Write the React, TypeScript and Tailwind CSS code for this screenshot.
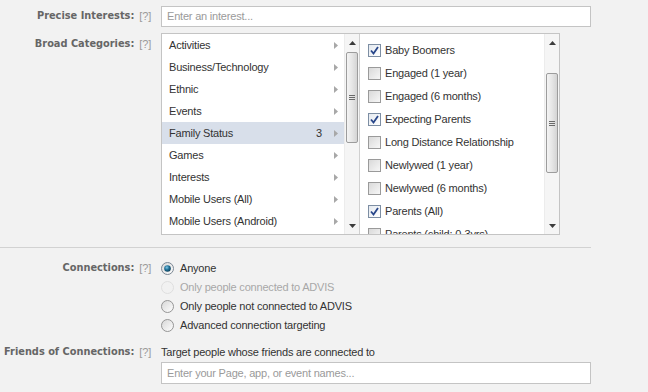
import React from "react";

const FONT = "font-['Liberation_Sans',Arial,sans-serif]";

function Help() {
  return <span className="ml-[5px] text-[11px] font-normal text-[#9a9a9a] font-['Liberation_Sans',Arial,sans-serif]">[?]</span>;
}

function Label({ children, className = "" }: { children: React.ReactNode; className?: string }) {
  return (
    <div className={`w-[161px] shrink-0 flex justify-end items-center pr-[10px] whitespace-nowrap ${className}`}>
      <span className="font-bold text-[9.8px] tracking-normal text-[#666] font-['DejaVu_Sans',Tahoma,sans-serif]">{children}</span>
      <Help />
    </div>
  );
}

function Arrow({ dir }: { dir: "up" | "down" }) {
  return (
    <div className="h-[17px] flex items-center justify-center">
      <svg width="7" height="4" viewBox="0 0 7 4">
        {dir === "up" ? <path d="M0 4 L3.5 0 L7 4 Z" fill="#3c3c3c" /> : <path d="M0 0 L3.5 4 L7 0 Z" fill="#3c3c3c" />}
      </svg>
    </div>
  );
}

function Scrollbar({ spacer, thumb }: { spacer: string; thumb: string }) {
  return (
    <div className="w-[15px] shrink-0 flex flex-col bg-[#f5f5f5] border-l border-[#ececec]">
      <Arrow dir="up" />
      <div className={spacer} />
      <div
        className={`${thumb} mx-[1px] rounded-[2px] border border-[#9c9c9c] bg-[linear-gradient(to_right,#f4f4f4,#e6e6e6_50%,#d4d4d4)] flex flex-col items-center justify-center gap-[1px]`}
      >
        <div className="w-[6px] h-px bg-[#6a6a6a]" />
        <div className="w-[6px] h-px bg-[#6a6a6a]" />
        <div className="w-[6px] h-px bg-[#6a6a6a]" />
      </div>
      <div className="flex-1" />
      <Arrow dir="down" />
    </div>
  );
}

function Tri() {
  return (
    <svg width="4" height="7" viewBox="0 0 4 7">
      <path d="M0 0 L4 3.5 L0 7 Z" fill="#a8a8a8" />
    </svg>
  );
}

function Checkbox({ checked }: { checked: boolean }) {
  return (
    <div
      className={`w-[13px] h-[13px] shrink-0 border flex items-center justify-center ${
        checked
          ? "border-[#7d8ea3] bg-[linear-gradient(135deg,#e4e9ef,#ffffff)]"
          : "border-[#9a9a9a] bg-[linear-gradient(135deg,#d9d9d9,#f7f7f7)]"
      }`}
    >
      {checked && (
        <svg width="9" height="9" viewBox="0 0 9 9">
          <path d="M1 4.5 L3.5 7.5 L8 1" fill="none" stroke="#28468a" strokeWidth="1.8" />
        </svg>
      )}
    </div>
  );
}

function Radio({ state }: { state: "on" | "off" | "disabled" }) {
  return (
    <svg width="13" height="13" viewBox="0 0 13 13" className="shrink-0">
      <defs>
        <linearGradient id="rg" x1="0" y1="0" x2="1" y2="1">
          <stop offset="0" stopColor="#d6d6d6" />
          <stop offset="1" stopColor="#ffffff" />
        </linearGradient>
        <radialGradient id="dot" cx="0.4" cy="0.35" r="0.7">
          <stop offset="0" stopColor="#7fc7e6" />
          <stop offset="0.5" stopColor="#1e6f96" />
          <stop offset="1" stopColor="#0d3b55" />
        </radialGradient>
      </defs>
      {state === "disabled" ? (
        <circle cx="6.5" cy="6.5" r="6" fill="#f1f1f1" stroke="#dedede" />
      ) : (
        <circle cx="6.5" cy="6.5" r="6" fill="url(#rg)" stroke={state === "on" ? "#7b8794" : "#959595"} />
      )}
      {state === "on" && <circle cx="6.5" cy="6.5" r="3.3" fill="url(#dot)" />}
    </svg>
  );
}

const categories = [
  "Activities",
  "Business/Technology",
  "Ethnic",
  "Events",
  "Family Status",
  "Games",
  "Interests",
  "Mobile Users (All)",
  "Mobile Users (Android)",
];

const statuses: [string, boolean][] = [
  ["Baby Boomers", true],
  ["Engaged (1 year)", false],
  ["Engaged (6 months)", false],
  ["Expecting Parents", true],
  ["Long Distance Relationship", false],
  ["Newlywed (1 year)", false],
  ["Newlywed (6 months)", false],
  ["Parents (All)", true],
  ["Parents (child: 0-3yrs)", false],
];

export default function App() {
  return (
    <div className={`${FONT} w-[648px] h-[392px] overflow-hidden bg-[#f2f2f2] text-[11px] text-[#333] tracking-[-0.2px] flex flex-col`}>
      {/* Precise Interests */}
      <div className="flex items-center mt-[6px]">
        <Label>Precise Interests:</Label>
        <div className="w-[430px] h-[21px] border border-[#c4c4c4] bg-white flex items-center px-[5px] text-[#9a9a9a]">
          Enter an interest...
        </div>
      </div>

      {/* Broad Categories */}
      <div className="flex mt-[6px]">
        <Label className="h-[20px] mt-[1px]">Broad Categories:</Label>
        <div className="w-[399px] h-[202px] border border-[#c4c4c4] bg-white flex overflow-hidden">
          <div className="flex shrink-0 border-r border-[#d0d0d0]">
            <div className="w-[182px] flex flex-col">
              {categories.map((c) => (
                <div
                  key={c}
                  className={`h-[22px] shrink-0 flex items-center pl-[7px] pr-[6px] ${c === "Family Status" ? "bg-[#d8dfea]" : ""}`}
                >
                  <span className="flex-1 whitespace-nowrap">{c}</span>
                  {c === "Family Status" && <span className="mr-[12px]">3</span>}
                  <Tri />
                </div>
              ))}
            </div>
            <Scrollbar spacer="h-[1px]" thumb="h-[91px]" />
          </div>
          <div className="flex flex-1">
            <div className="flex-1 flex flex-col pt-[5px] overflow-hidden">
              {statuses.map(([s, c]) => (
                <div key={s} className="h-[23px] shrink-0 flex items-center pl-[8px] gap-[4px] whitespace-nowrap">
                  <Checkbox checked={c} />
                  <span>{s}</span>
                </div>
              ))}
            </div>
            <Scrollbar spacer="h-[22px]" thumb="h-[100px]" />
          </div>
        </div>
      </div>

      {/* divider */}
      <div className="mt-[12px] w-[591px] h-px bg-[#d2d2d2]" />

      {/* Connections */}
      <div className="flex mt-[11px]">
        <Label className="h-[19px] items-center">Connections:</Label>
        <div className="flex flex-col">
          {([
            ["Anyone", "on"],
            ["Only people connected to ADVIS", "disabled"],
            ["Only people not connected to ADVIS", "off"],
            ["Advanced connection targeting", "off"],
          ] as [string, "on" | "off" | "disabled"][]).map(([t, s]) => (
            <div key={t} className="h-[19px] flex items-center gap-[6px]">
              <Radio state={s} />
              <span className={s === "disabled" ? "text-[#a8a8a8]" : ""}>{t}</span>
            </div>
          ))}
        </div>
      </div>

      {/* Friends of Connections */}
      <div className="flex mt-[8px]">
        <Label className="h-[18px]">Friends of Connections:</Label>
        <div className="flex flex-col">
          <div className="h-[18px] flex items-center">Target people whose friends are connected to</div>
          <div className="mt-[1px] w-[430px] h-[22px] border border-[#c4c4c4] bg-white flex items-center px-[5px] text-[#9a9a9a]">
            Enter your Page, app, or event names...
          </div>
        </div>
      </div>
    </div>
  );
}
